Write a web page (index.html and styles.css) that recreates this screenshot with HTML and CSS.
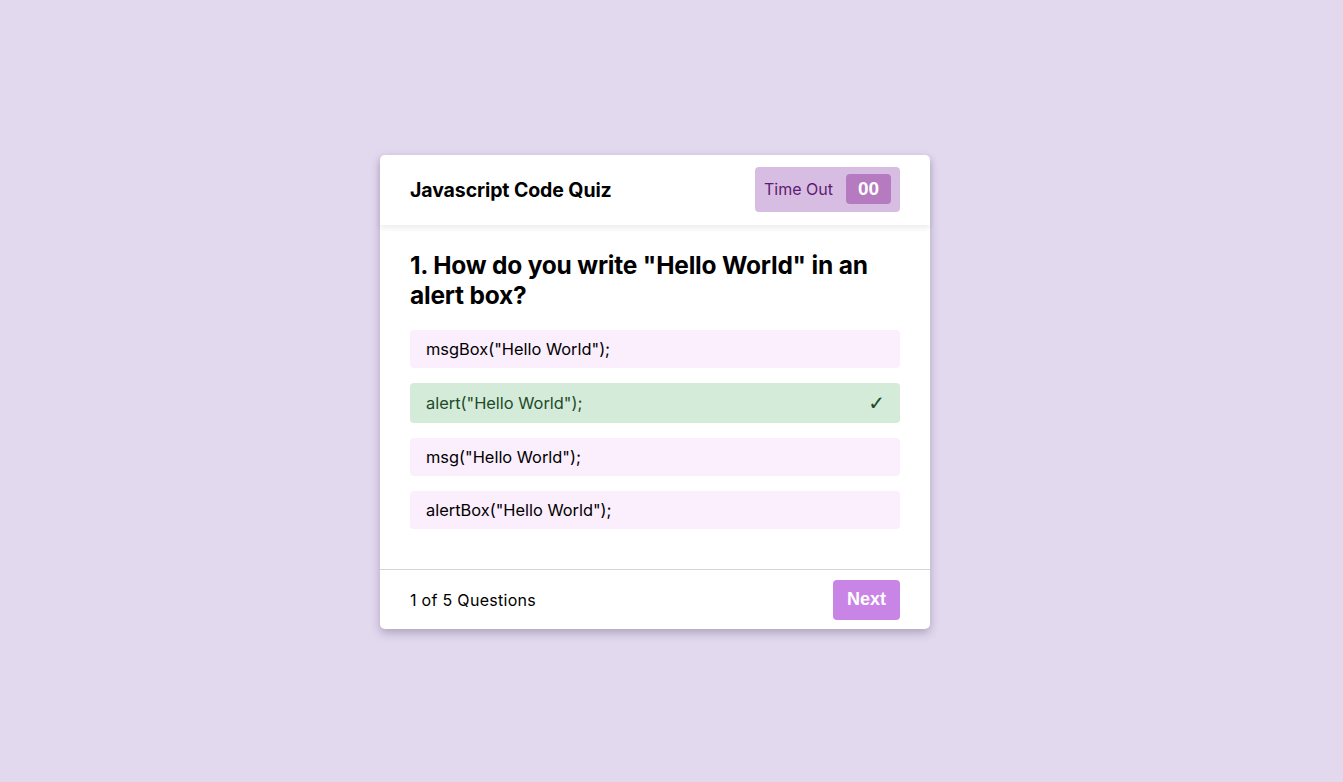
FILE: index.html
```html
<!DOCTYPE html>
<html>
<head>
<meta charset="utf-8">
<link rel="stylesheet" href="styles.css">
</head>
<body>
<div class="page">
  <div class="quiz">
    <header class="quiz-header">
      <div class="quiz-title">Javascript Code Quiz</div>
      <div class="timer">
        <span class="timer-label">Time Out</span>
        <span class="timer-sec">00</span>
      </div>
    </header>
    <section class="quiz-body">
      <h2 class="question">1. How do you write "Hello World" in an alert box?</h2>
      <div class="options">
        <div class="option">msgBox("Hello World");</div>
        <div class="option correct"><span>alert("Hello World");</span><span class="tick">✓</span></div>
        <div class="option">msg("Hello World");</div>
        <div class="option">alertBox("Hello World");</div>
      </div>
    </section>
    <footer class="quiz-footer">
      <div class="count">1 of 5 Questions</div>
      <button class="next">Next</button>
    </footer>
  </div>
</div>
</body>
</html>
```

FILE: styles.css
```css
* { box-sizing: border-box; }
html, body { margin: 0; padding: 0; }
body {
  background: #e2d9ef;
  font-family: "Inter", "Liberation Sans", sans-serif;
  color: #000;
}
.page {
  height: 782px;
  display: flex;
  align-items: center;
  justify-content: center;
  padding-right: 33px;
}
.quiz {
  width: 550px;
  background: #fff;
  border-radius: 5px;
  box-shadow: 0 4px 10px rgba(60, 40, 80, 0.3);
  margin-top: 2px;
}
.quiz-header {
  height: 70px;
  padding: 0 30px;
  display: flex;
  align-items: center;
  justify-content: space-between;
  box-shadow: 0 3px 6px rgba(0, 0, 0, 0.08);
  position: relative;
}
.quiz-title {
  font-size: 19.5px;
  font-weight: 700;
  letter-spacing: -0.1px;
}
.timer {
  width: 145px;
  height: 45px;
  background: #d8bde2;
  border-radius: 4px;
  display: flex;
  align-items: center;
  justify-content: space-between;
  padding: 0 9px 0 9px;
  margin-top: -2px;
}
.timer-label {
  color: #5c1a73;
  font-size: 16px;
}
.timer-sec {
  width: 45px;
  height: 30px;
  background: #b57abf;
  border-radius: 4px;
  color: #fff;
  font-family: "Liberation Sans", Arial, sans-serif;
  font-size: 19px;
  font-weight: 700;
  display: flex;
  align-items: center;
  justify-content: center;
}
.quiz-body {
  padding: 25px 30px 40px;
}
.question {
  margin: 0 0 20px;
  font-size: 24.5px;
  line-height: 30px;
  font-weight: 700;
  letter-spacing: -0.2px;
}
.options {
  display: flex;
  flex-direction: column;
  gap: 15px;
}
.option {
  height: 38px;
  background: #fbeefd;
  border-radius: 4px;
  padding: 0 16px;
  display: flex;
  align-items: center;
  justify-content: space-between;
  font-size: 16.4px;
}
.option.correct {
  height: 40px;
  background: #d4ebd9;
  color: #1d4a28;
}
.tick {
  font-family: "DejaVu Sans", sans-serif;
  font-size: 20px;
  color: #1d4a28;
  margin-right: -1px;
}
.quiz-footer {
  height: 60px;
  border-top: 1px solid #d4d4d8;
  padding: 0 30px;
  display: flex;
  align-items: center;
  justify-content: space-between;
}
.count {
  font-size: 16px;
  letter-spacing: 0.3px;
}
.next {
  width: 67px;
  height: 40px;
  border: none;
  border-radius: 4px;
  background: #c985e6;
  color: #fff;
  font-family: "Liberation Sans", Arial, sans-serif;
  font-size: 18px;
  font-weight: 700;
  padding: 0;
}
```
